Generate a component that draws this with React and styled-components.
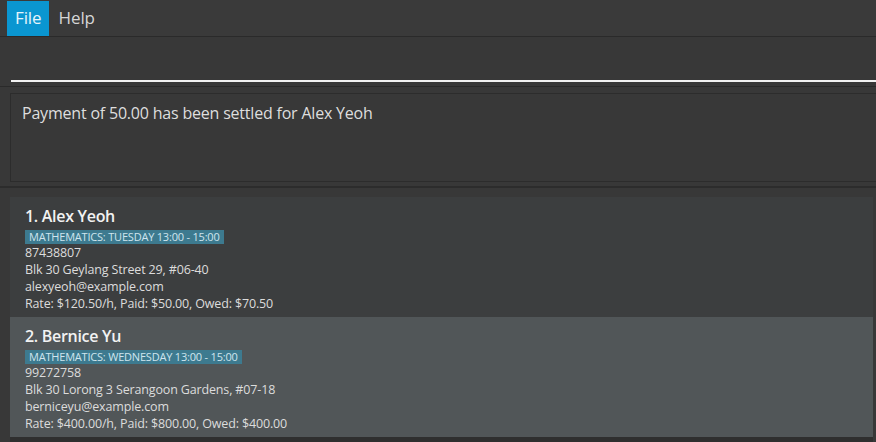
import styled, { createGlobalStyle } from 'styled-components';

const GlobalStyle = createGlobalStyle`
  html, body {
    margin: 0;
    padding: 0;
    background: #383838;
  }
  * {
    box-sizing: border-box;
  }
`;

const students = [
  {
    id: 1,
    name: 'Alex Yeoh',
    lesson: 'MATHEMATICS: TUESDAY 13:00 - 15:00',
    phone: '87438807',
    address: 'Blk 30 Geylang Street 29, #06-40',
    email: 'alexyeoh@example.com',
    rate: 'Rate: $120.50/h, Paid: $50.00, Owed: $70.50',
  },
  {
    id: 2,
    name: 'Bernice Yu',
    lesson: 'MATHEMATICS: WEDNESDAY 13:00 - 15:00',
    phone: '99272758',
    address: 'Blk 30 Lorong 3 Serangoon Gardens, #07-18',
    email: 'berniceyu@example.com',
    rate: 'Rate: $400.00/h, Paid: $800.00, Owed: $400.00',
  },
];

function App() {
  return (
    <StWindow>
      <GlobalStyle />
      <StMenuBar>
        <StMenuItem $active>File</StMenuItem>
        <StMenuItem>Help</StMenuItem>
      </StMenuBar>

      <StCommandPane>
        <StCommandField />
      </StCommandPane>

      <StResultPane>
        <StResultBox>Payment of 50.00 has been settled for Alex Yeoh</StResultBox>
      </StResultPane>

      <StListPane>
        <StList>
          {students.map((s, i) => (
            <StCard key={s.id} $selected={i === 1}>
              <StName>
                {s.id}. {s.name}
              </StName>
              <StTag>{s.lesson}</StTag>
              <StLine>{s.phone}</StLine>
              <StLine>{s.address}</StLine>
              <StLine>{s.email}</StLine>
              <StLine>{s.rate}</StLine>
            </StCard>
          ))}
        </StList>
      </StListPane>
    </StWindow>
  );
}

export default App;

const StWindow = styled.div`
  width: 876px;
  height: 442px;
  display: flex;
  flex-direction: column;
  background: #383838;
  font-family: 'Open Sans', 'Noto Sans', sans-serif;
  overflow: hidden;
`;

const StMenuBar = styled.div`
  height: 37px;
  display: flex;
  align-items: stretch;
  gap: 2px;
  padding: 1px 0 0 7px;
  background: #3a3a3a;
  border-bottom: 1px solid #2a2a2a;
`;

const StMenuItem = styled.div`
  display: flex;
  align-items: center;
  padding: 0 7px 1px 8px;
  font-size: 17px;
  letter-spacing: -0.1px;
  color: ${p => (p.$active ? '#e6f4fb' : '#d6d6d6')};
  background: ${p => (p.$active ? '#0a96d1' : 'transparent')};
`;

const StCommandPane = styled.div`
  height: 51px;
  padding: 0 0 4px 11px;
  display: flex;
  align-items: flex-end;
  border-bottom: 1px solid #2a2a2a;
`;

const StCommandField = styled.div`
  flex: 1;
  height: 2px;
  background: #f2f2f2;
`;

const StResultPane = styled.div`
  height: 101px;
  padding: 6px 0 5px 10px;
  border-bottom: 2px solid #2c2c2c;
`;

const StResultBox = styled.div`
  height: 89px;
  padding: 8px 11px;
  border: 1px solid #2c2c2c;
  border-right: none;
  background: #383838;
  font-size: 16px;
  letter-spacing: -0.2px;
  color: #dedede;
`;

const StListPane = styled.div`
  flex: 1;
  padding: 9px 3px 0 10px;
  background: #383838;
`;

const StList = styled.div`
  display: flex;
  flex-direction: column;
  border-bottom: 5px solid #2f2f2f;
`;

const StCard = styled.div`
  height: 120px;
  padding: 8px 15px 0 15px;
  display: flex;
  flex-direction: column;
  align-items: flex-start;
  background: ${p => (p.$selected ? '#515658' : '#3c3e3f')};
`;

const StName = styled.div`
  font-size: 16px;
  font-weight: 600;
  line-height: 22px;
  letter-spacing: -0.3px;
  color: #f2f2f2;
`;

const StTag = styled.div`
  margin-top: 3px;
  padding: 0 4px;
  font-size: 11px;
  line-height: 14px;
  letter-spacing: -0.2px;
  color: #cfe5ee;
  background: #3d7a8f;
`;

const StLine = styled.div`
  font-size: 12.5px;
  line-height: 17px;
  letter-spacing: -0.15px;
  color: #dcdcdc;
`;
